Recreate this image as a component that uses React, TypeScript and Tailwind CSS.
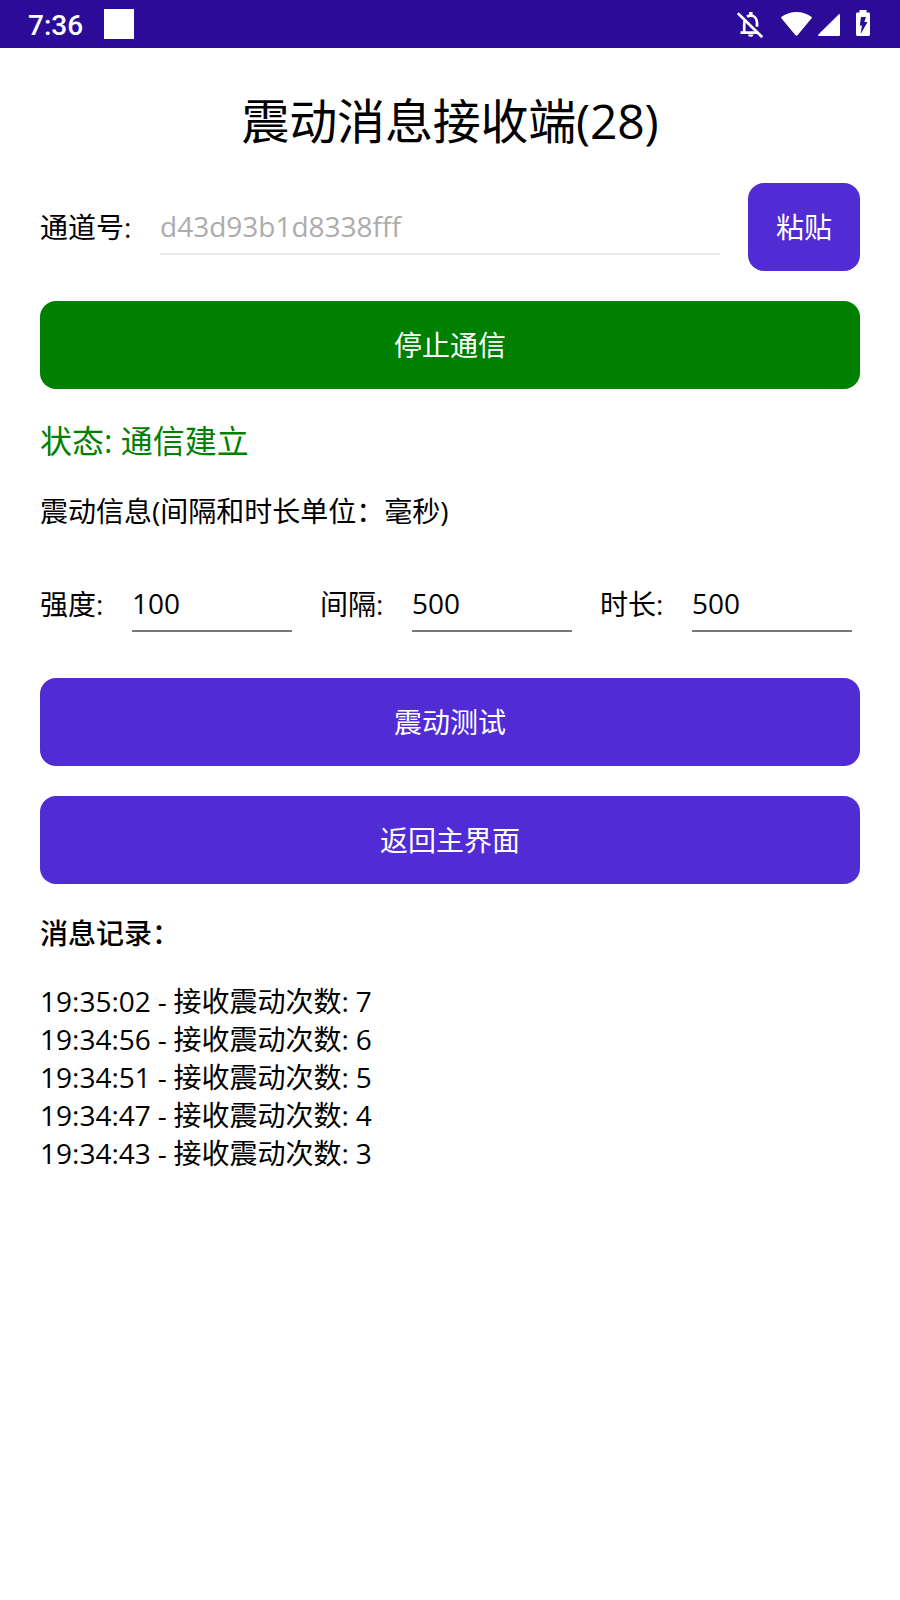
const records = [
  { time: "19:35:02", count: 7 },
  { time: "19:34:56", count: 6 },
  { time: "19:34:51", count: 5 },
  { time: "19:34:47", count: 4 },
  { time: "19:34:43", count: 3 },
];

const params = [
  { label: "强度:", value: "100" },
  { label: "间隔:", value: "500" },
  { label: "时长:", value: "500" },
];

function StatusBar() {
  return (
    <header className="flex h-12 items-center bg-[#2b0b98] pl-7 pr-[30px] text-white">
      <span className="w-[54px] pt-[3px] font-['Roboto',sans-serif] text-[28px] font-medium leading-none">
        7:36
      </span>
      <span className="ml-[22px] size-[30px] bg-white" />
      <div className="ml-auto flex items-start">
        <svg className="mt-[2px] size-[26px]" viewBox="0 0 26 26" fill="none" stroke="currentColor" strokeWidth="2.700">
          <path d="M.8 1.200 25.200 25.200" />
          <path d="M3.500 20.700h17M7.200 20V12q0-2 .8-3.500M10 4.700c1-.6 2.200-1 3.600-1 3.700 0 6.400 3 6.400 7v4" />
          <path d="M13.800 0v4" strokeWidth="3.500" />
          <path fill="currentColor" stroke="none" d="M11 22.400h5.400c0 3.200-5.400 3.200-5.400 0z" />
        </svg>
        <svg className="ml-[18px] mt-[2px] h-6 w-[31px]" viewBox="0 0 31 24" fill="currentColor">
          <path d="M14.500 23.300.4 6.200Q-.2 5.400.6 4.800C9-1.600 22-1.600 30.400 4.800Q31.200 5.400 30.600 6.200L16.500 23.300Q15.500 24.200 14.500 23.300z" />
        </svg>
        <svg className="ml-[6px] mt-1 size-[22px]" viewBox="0 0 22 22" fill="currentColor">
          <path d="M.4 20.600 20.600.4Q22-.4 22 1v20q0 1-1 1H1q-1.400 0-.6-1.400z" />
        </svg>
        <svg className="ml-4 h-[26px] w-[14px]" viewBox="0 0 14 26">
          <path fill="currentColor" d="M3.500 0h7v2.600h2.200Q14 2.600 14 4v20.600Q14 26 12.700 26H1.300Q0 26 0 24.600V4q0-1.400 1.300-1.400h2.200z" />
          <path fill="#2b0b98" d="M5 7h5L8.300 12H11.500L4.700 24l1.200-8.500H3.800z" />
        </svg>
      </div>
    </header>
  );
}

function Button({ label, className }: { label: string; className: string }) {
  return (
    <button
      className={`flex h-[88px] items-center justify-center rounded-2xl text-[28px] text-white ${className}`}
    >
      {label}
    </button>
  );
}

export default function App() {
  return (
    <div className="min-h-[1600px] w-[900px] bg-white font-['Open_Sans','Noto_Sans_CJK_SC',sans-serif] text-[28px] leading-[38px] text-black">
      <StatusBar />
      <main className="flex flex-col px-10 pt-10">
        <h1 className="text-center text-[48px] leading-[65px] tracking-[-0.2px]">
          震动消息接收端(28)
        </h1>

        <div className="mt-[30px] flex items-center">
          <label className="w-[120px]">通道号:</label>
          <div className="h-14 w-[560px] border-b-2 border-[#ececec] pt-2 text-[#acacac]">
            d43d93b1d8338fff
          </div>
          <Button label="粘贴" className="ml-7 w-28 bg-[#512bd4]" />
        </div>

        <Button label="停止通信" className="mt-[30px] bg-[#008000]" />

        <p className="mt-[30px] text-[32px] leading-[43px] text-[#008000]">状态: 通信建立</p>
        <p className="mt-[30px]">震动信息(间隔和时长单位：毫秒)</p>

        <div className="mt-[30px] flex h-[88px] items-center">
          {params.map((param) => (
            <div key={param.label} className="flex w-[280px] shrink-0 items-center">
              <label className="w-[92px]">{param.label}</label>
              <div className="h-14 w-40 border-b-2 border-[#777] pt-2">{param.value}</div>
            </div>
          ))}
        </div>

        <Button label="震动测试" className="mt-[30px] bg-[#512bd4]" />
        <Button label="返回主界面" className="mt-[30px] bg-[#512bd4]" />

        <h2 className="mt-[30px] font-medium">消息记录：</h2>
        <ul className="mt-[30px] [word-spacing:-0.4px]">
          {records.map((record) => (
            <li key={record.time}>
              {record.time} - 接收震动次数: {record.count}
            </li>
          ))}
        </ul>
      </main>
    </div>
  );
}
